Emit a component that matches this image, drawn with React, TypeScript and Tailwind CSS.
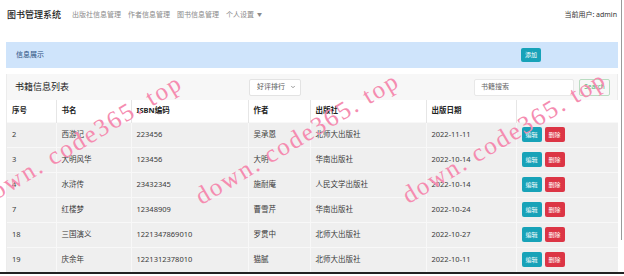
import { ChevronDown } from 'lucide-react';

const books = [
  { id: '2', name: '西游记', isbn: '223456', author: '吴承恩', press: '北师大出版社', date: '2022-11-11' },
  { id: '3', name: '大明风华', isbn: '123456', author: '大明', press: '华南出版社', date: '2022-10-14' },
  { id: '4', name: '水浒传', isbn: '23432345', author: '施耐庵', press: '人民文学出版社', date: '2022-10-14' },
  { id: '7', name: '红楼梦', isbn: '12348909', author: '曹雪芹', press: '华南出版社', date: '2022-10-24' },
  { id: '18', name: '三国演义', isbn: '1221347869010', author: '罗贯中', press: '北师大出版社', date: '2022-10-27' },
  { id: '19', name: '庆余年', isbn: '1221312378010', author: '猫腻', press: '北师大出版社', date: '2022-10-11' },
];

const cols = ['序号', '书名', 'ISBN编码', '作者', '出版社', '出版日期', ''];
const widths = [49, 75, 117, 62, 116, 90, 102];

const marks = [
  { x: 80, y: 140 },
  { x: 297, y: 138 },
  { x: 504, y: 137 },
];

export default function App() {
  return (
    <div className="relative w-[624px] h-[276px] overflow-hidden bg-white text-[#3a3a3a] font-['Noto_Sans','Noto_Sans_CJK_SC',sans-serif]">
      {/* 顶部导航 */}
      <nav className="h-[30px] flex items-center px-[7px]">
        <span className="text-[9px] font-medium text-[#222] mr-[11px]">图书管理系统</span>
        <div className="flex items-center gap-[7px] text-[7px] text-[#8a8a8a]">
          <span>出版社信息管理</span>
          <span>作者信息管理</span>
          <span>图书信息管理</span>
          <span className="flex items-center gap-[3px]">
            个人设置
            <span className="text-[5px]">▼</span>
          </span>
        </div>
        <span className="ml-auto text-[7px] text-[#333]">当前用户: admin</span>
      </nav>

      {/* 信息展示 */}
      <div className="mt-[12px] mx-[6px] h-[26px] bg-[#cfe4fb] flex items-center pl-[10px]">
        <span className="text-[7px] text-[#2b4f7e]">信息展示</span>
        <button className="ml-auto mr-[77px] w-[20px] h-[14px] rounded-[2px] bg-[#17a2b8] text-white text-[6px] leading-none">
          添加
        </button>
      </div>

      {/* 书籍列表 */}
      <div className="mt-[6px] mx-[6px] border-x border-[#ececec]">
        <div className="h-[26px] bg-[#f7f7f7] flex items-center pl-[8px] pr-[7px]">
          <span className="w-[234px] text-[9px] text-[#222]">书籍信息列表</span>
          <div className="w-[52px] h-[17px] bg-white border border-[#e3e3e3] rounded-[2px] flex items-center pl-[7px] pr-[4px] text-[7px] text-[#555]">
            好评排行
            <ChevronDown className="ml-auto w-[6px] h-[6px] text-[#777]" strokeWidth={3} />
          </div>
          <div className="ml-auto w-[100px] h-[17px] bg-white border border-[#e8e8e8] rounded-[2px] flex items-center pl-[6px] text-[7px] text-[#666]">
            书籍搜索
          </div>
          <button className="ml-[5px] w-[31px] h-[17px] border border-[#b9dcc1] rounded-[2px] text-[6.5px] text-[#4caf6a]">
            Search
          </button>
        </div>

        <table className="w-full table-fixed border-collapse text-[7.5px]">
          <colgroup>
            {widths.map((w, i) => (
              <col key={i} style={{ width: w }} />
            ))}
          </colgroup>
          <thead>
            <tr className="h-[22px] bg-white">
              {cols.map((c, i) => (
                <th key={i} className="text-left font-bold text-[#222] pl-[5px] border-l border-[#e6e6e6] first:border-l-0">
                  {c}
                </th>
              ))}
            </tr>
          </thead>
          <tbody>
            {books.map((b) => (
              <tr key={b.id} className="h-[25px] bg-[#efefef] border-t border-[#f8f8f8]">
                <td className="pl-[5px]">{b.id}</td>
                <td className="pl-[5px] border-l border-[#f8f8f8]">{b.name}</td>
                <td className="pl-[5px] border-l border-[#f8f8f8]">{b.isbn}</td>
                <td className="pl-[5px] border-l border-[#f8f8f8]">{b.author}</td>
                <td className="pl-[5px] border-l border-[#f8f8f8]">{b.press}</td>
                <td className="pl-[5px] border-l border-[#f8f8f8]">{b.date}</td>
                <td className="pl-[5px] border-l border-[#f8f8f8]">
                  <div className="flex gap-[3px]">
                    <button className="w-[20px] h-[15px] rounded-[2px] bg-[#17a2b8] text-white text-[6px] leading-none">编辑</button>
                    <button className="w-[20px] h-[15px] rounded-[2px] bg-[#dc3545] text-white text-[6px] leading-none">删除</button>
                  </div>
                </td>
              </tr>
            ))}
          </tbody>
        </table>
      </div>

      {/* 底部深色线 */}
      <div className="h-[2px] bg-[#222]" />

      {/* 右侧滚动线 */}
      <div className="absolute left-[621px] top-0 w-px h-[240px] bg-[#9a9a9a]" />

      {/* 水印 */}
      {marks.map((m, i) => (
        <span
          key={i}
          className="absolute -translate-x-1/2 -translate-y-1/2 rotate-[-31deg] whitespace-nowrap text-[25px] tracking-[2px] leading-none text-[#f58cb0] font-['Liberation_Serif',serif] pointer-events-none"
          style={{ left: m.x, top: m.y }}
        >
          down. code365. top
        </span>
      ))}
    </div>
  );
}
